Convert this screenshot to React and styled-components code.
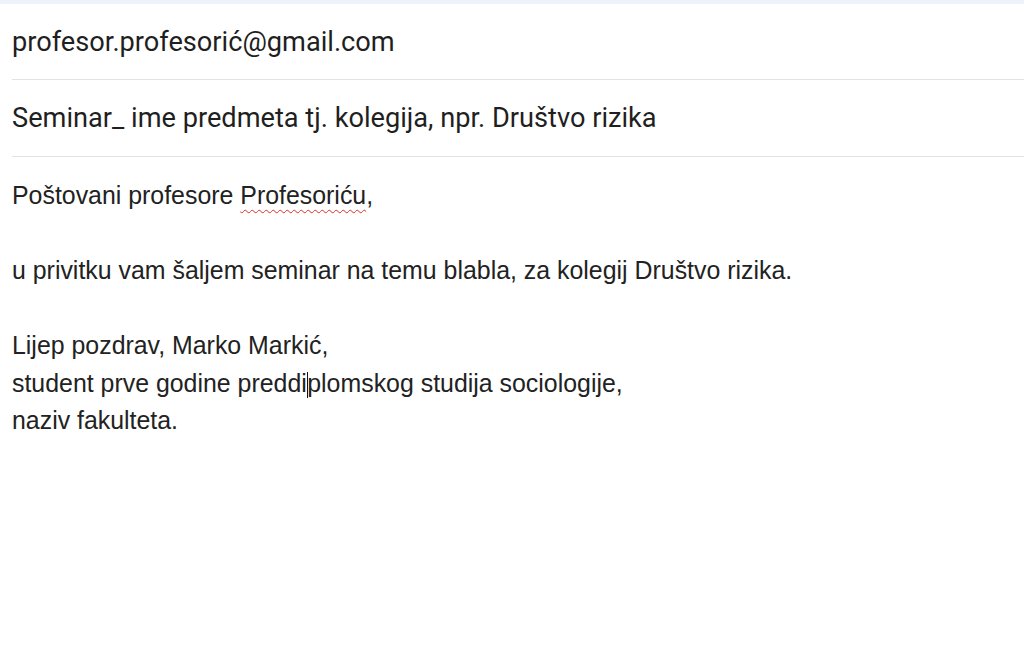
import React from "react";
import styled, { createGlobalStyle } from "styled-components";

const Global = createGlobalStyle`
  html, body {
    margin: 0;
    padding: 0;
    background: #ffffff;
  }
`;

const Page = styled.div`
  display: flex;
  flex-direction: column;
  min-height: 648px;
  background: #fff;
`;

const TopStrip = styled.div`
  height: 4px;
  background: #eef2fa;
`;

const Field = styled.div`
  display: flex;
  align-items: center;
  height: ${(p) => p.h}px;
  margin-left: 12px;
  border-bottom: 1.5px solid #e3e3e3;
  font-family: Roboto, "Noto Sans", sans-serif;
  font-size: 27.2px;
  color: #1f1f1f;
  box-sizing: border-box;
`;

const Body = styled.div`
  padding: 20px 12px 0 12px;
  font-family: "Liberation Sans", Arial, sans-serif;
  font-size: 24.9px;
  line-height: 37.5px;
  color: #222;
`;

const Line = styled.div`
  min-height: 37.5px;
  white-space: nowrap;
`;

const Misspelled = styled.span`
  text-decoration: underline wavy #d93025;
  text-decoration-thickness: 1px;
  text-underline-offset: 5px;
`;

const Caret = styled.span`
  display: inline-block;
  width: 1.5px;
  height: 26px;
  margin: 0 -1px 0 0;
  background: #111;
  vertical-align: -6px;
`;

export default function App() {
  return (
    <Page>
      <Global />
      <TopStrip />
      <Field h={76}>profesor.profesorić@gmail.com</Field>
      <Field h={77}>Seminar_ ime predmeta tj. kolegija, npr. Društvo rizika</Field>
      <Body>
        <Line>
          Poštovani profesore <Misspelled>Profesoriću</Misspelled>,
        </Line>
        <Line />
        <Line>u privitku vam šaljem seminar na temu blabla, za kolegij Društvo rizika.</Line>
        <Line />
        <Line>Lijep pozdrav, Marko Markić,</Line>
        <Line>
          student prve godine preddi<Caret />plomskog studija sociologije,
        </Line>
        <Line>naziv fakulteta.</Line>
      </Body>
    </Page>
  );
}
